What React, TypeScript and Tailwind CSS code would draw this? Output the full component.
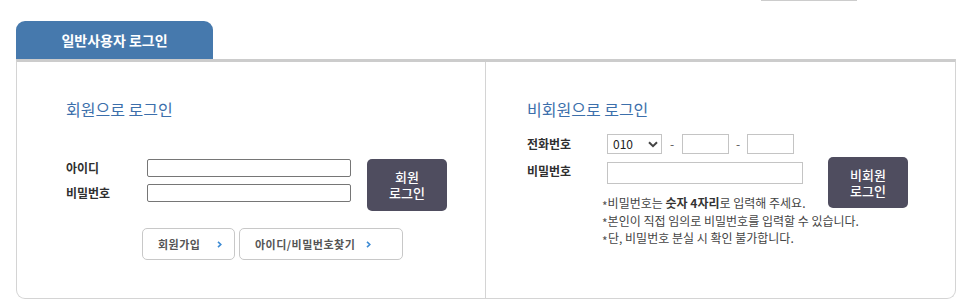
import React from "react";

function Chevron() {
  return (
    <svg width="5" height="7" viewBox="0 0 5 7" className="shrink-0">
      <path d="M1 0.8 L3.8 3.5 L1 6.2" fill="none" stroke="#3d8bd4" strokeWidth="1.6" />
    </svg>
  );
}

function Note({ children }: { children: React.ReactNode }) {
  return (
    <div className="flex items-center whitespace-nowrap">
      <span className="w-[6px] text-[12px] leading-[10px] translate-y-[3px] text-[#555]">*</span>
      <span>{children}</span>
    </div>
  );
}

export default function App() {
  return (
    <div className="w-[960px] h-[304px] bg-white overflow-hidden font-['Noto_Sans_CJK_KR','Noto_Sans',sans-serif] text-[#333]">
      <div className="h-[1px] w-[96px] ml-[761px] bg-[#cccccc]" />
      <div className="ml-4 mt-[20px] w-[197px] h-[38px] rounded-t-[9px] bg-[#4679ad] text-white font-bold text-[14px] flex items-center justify-center">
        일반사용자 로그인
      </div>
      <div className="ml-4 w-[940px] h-[240px] border-t-[3px] border-t-[#cccccc] border-x border-b border-x-[#d4d4d4] border-b-[#d4d4d4] rounded-b-[9px] flex">
        {/* Member login */}
        <div className="w-[469px] border-r border-[#d4d4d4] pl-[49px] pt-[37px]">
          <div className="h-[20px] leading-[20px] text-[16px] text-[#3c6fab]">회원으로 로그인</div>
          <div className="mt-[40px] flex items-start">
            <div className="flex flex-col gap-[7px]">
              <div className="flex items-center h-[18px]">
                <span className="w-[81px] text-[12px] font-bold leading-[16px] text-[#2f2f2f]">아이디</span>
                <input className="w-[204px] h-[18px] border border-[#767676] rounded-[2px] bg-white outline-none" />
              </div>
              <div className="flex items-center h-[18px]">
                <span className="w-[81px] text-[12px] font-bold leading-[16px] text-[#2f2f2f]">비밀번호</span>
                <input type="password" className="w-[204px] h-[18px] border border-[#767676] rounded-[2px] bg-white outline-none" />
              </div>
            </div>
            <button className="ml-[16px] w-[80px] h-[52px] rounded-[5px] bg-[#4f4d5f] text-white text-[13px] leading-[16px] font-medium flex items-center justify-center">
              <span className="text-center">
                회원
                <br />
                로그인
              </span>
            </button>
          </div>
          <div className="mt-[17px] ml-[76px] flex gap-[4px]">
            <button className="w-[93px] h-[32px] border border-[#c8c8c8] rounded-[5px] flex items-center pl-[15px] gap-[17px] text-[11px] font-bold tracking-[0.5px] text-[#555]">
              <span>회원가입</span>
              <Chevron />
            </button>
            <button className="w-[164px] h-[32px] border border-[#c8c8c8] rounded-[5px] flex items-center pl-[15px] gap-[11px] text-[11px] font-bold tracking-[0.5px] text-[#555]">
              <span>아이디/비밀번호찾기</span>
              <Chevron />
            </button>
          </div>
        </div>
        {/* Non-member login */}
        <div className="flex-1 pl-[41px] pt-[37px]">
          <div className="h-[20px] leading-[20px] text-[16px] text-[#3c6fab]">비회원으로 로그인</div>
          <div className="mt-[15px] flex items-center h-[20px]">
            <span className="w-[80px] text-[12px] font-bold leading-[16px] text-[#2f2f2f]">전화번호</span>
            <div className="w-[55px] h-[20px] border border-[#c4c4c4] flex items-center justify-between pl-[5px] pr-[3px] text-[12px] text-[#222]">
              <span className="leading-[16px]">010</span>
              <svg width="10" height="7" viewBox="0 0 10 7">
                <path d="M1 1.2 L5 5.2 L9 1.2" fill="none" stroke="#444" strokeWidth="2" />
              </svg>
            </div>
            <span className="w-[20px] text-center text-[12px] text-[#555]">-</span>
            <input className="w-[47px] h-[20px] border border-[#c4c4c4] outline-none" />
            <span className="w-[18px] text-center text-[12px] text-[#555]">-</span>
            <input className="w-[47px] h-[20px] border border-[#c4c4c4] outline-none" />
          </div>
          <div className="mt-[3px] flex items-start">
            <span className="w-[80px] mt-[6px] text-[12px] font-bold leading-[16px] text-[#2f2f2f]">비밀번호</span>
            <div className="w-[196px] flex flex-col">
              <input type="password" className="mt-[5px] w-[196px] h-[22px] border border-[#c4c4c4] outline-none" />
              <div className="mt-[10px] -ml-[5px] text-[12px] leading-[17.5px] text-[#444]">
                <Note>
                  비밀번호는 <b className="text-[#333]">숫자 4자리</b>로 입력해 주세요.
                </Note>
                <Note>본인이 직접 임의로 비밀번호를 입력할 수 있습니다.</Note>
                <Note>단, 비밀번호 분실 시 확인 불가합니다.</Note>
              </div>
            </div>
            <button className="ml-[25px] w-[80px] h-[51px] rounded-[5px] bg-[#4f4d5f] text-white text-[13px] leading-[16px] font-medium flex items-center justify-center">
              <span className="text-center">
                비회원
                <br />
                로그인
              </span>
            </button>
          </div>
        </div>
      </div>
    </div>
  );
}
